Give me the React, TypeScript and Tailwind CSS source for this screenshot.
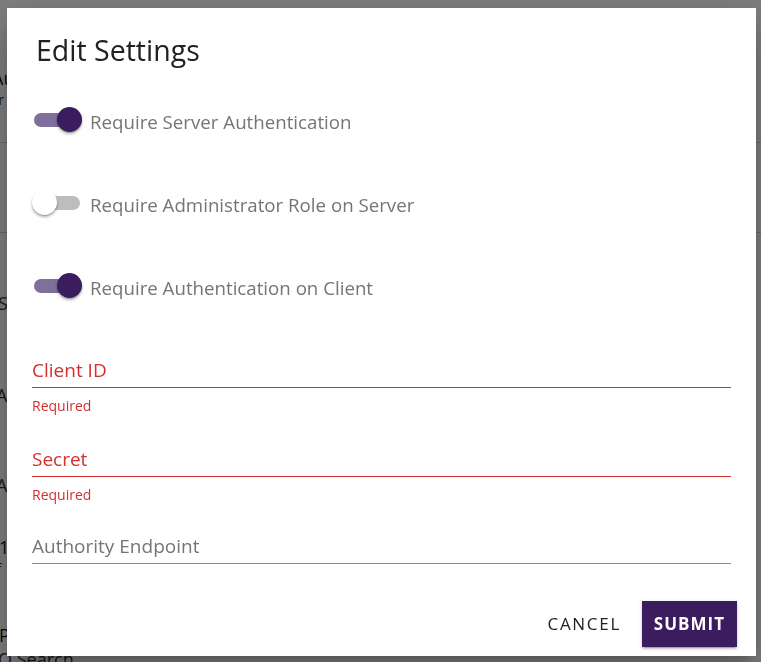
import React from "react";

const FONT = { fontFamily: '"Open Sans", "Noto Sans", sans-serif' };

function Toggle({ on }: { on: boolean }) {
  return (
    <span className="relative inline-flex h-[26px] w-[50px] shrink-0 items-center">
      <span
        className={`absolute left-[2px] top-[6px] h-[14px] w-[46px] rounded-full ${
          on ? "bg-[#7f6f9c]" : "bg-[#bdbdbd]"
        }`}
      />
      <span
        className={`absolute top-0 h-[25px] w-[25px] rounded-full shadow-[0_2px_3px_rgba(0,0,0,0.3),0_1px_1px_rgba(0,0,0,0.15)] ${
          on ? "left-[25px] bg-[#3b1c5f]" : "left-0 bg-white"
        }`}
      />
    </span>
  );
}

function ToggleRow({ on, label, className }: { on: boolean; label: string; className?: string }) {
  return (
    <div className={`flex h-[26px] items-center gap-[8px] ${className ?? ""}`}>
      <Toggle on={on} />
      <span className="pt-[3px] text-[18.7px] leading-[24px] text-[#757575]">{label}</span>
    </div>
  );
}

function Field({
  label,
  error,
  className,
}: {
  label: string;
  error?: boolean;
  className?: string;
}) {
  return (
    <div className={className}>
      <div
        className={`flex h-[33px] items-end border-b pb-[5px] ${
          error ? "border-[#d32f2f]" : "border-[#8e8e8e]"
        }`}
      >
        <span className={`text-[19px] leading-[24px] ${error ? "text-[#d32f2f]" : "text-[#757575]"}`}>
          {label}
        </span>
      </div>
      {error && (
        <div className="mt-[9px] text-[14px] leading-[18px] text-[#d32f2f]">Required</div>
      )}
    </div>
  );
}

export default function App() {
  return (
    <div className="relative h-[662px] w-[761px] overflow-hidden bg-white" style={FONT}>
      {/* underlying page */}
      <div className="flex flex-col text-[#111]">
        <div className="h-[143px] border-b border-[#cfcfcf] pt-[66px]">
          <div className="-ml-[8px] text-[18px] leading-[24px]">Au</div>
          <div className="-ml-[12px] text-[14px] leading-[20px] text-[#333]">Gr</div>
        </div>
        <div className="h-[90px] border-b border-[#cfcfcf]" />
        <div className="-ml-[2px] pt-[58px] text-[18px] leading-[24px] text-[#333]">S</div>
        <div className="-ml-[4px] pt-[68px] text-[18px] leading-[24px] text-[#333]">A</div>
        <div className="-ml-[4px] pt-[66px] text-[18px] leading-[24px] text-[#333]">A</div>
        <div className="-ml-[1px] pt-[38px] text-[18px] leading-[24px]">1</div>
        <div className="-ml-[12px] text-[14px] leading-[20px] text-[#333]">of</div>
        <div className="-ml-[1px] pt-[44px] text-[18px] leading-[24px]">Pa</div>
        <div className="-ml-[2px] text-[18px] leading-[24px] text-[#333]">Q Search</div>
      </div>

      {/* backdrop + dialog */}
      <div className="fixed inset-0 bg-black/50">
        <div className="ml-[7px] mt-[8px] flex h-[648px] w-[749px] flex-col bg-white shadow-[0_11px_15px_-7px_rgba(0,0,0,0.2),0_24px_38px_3px_rgba(0,0,0,0.14),0_9px_46px_8px_rgba(0,0,0,0.12)]">
          <h2 className="pl-[29px] pt-[24px] text-[28.5px] leading-[36px] font-normal text-[#212121]">
            Edit Settings
          </h2>
          <div className="flex flex-col px-[25px]">
            <ToggleRow on label="Require Server Authentication" className="mt-[39px]" />
            <ToggleRow on={false} label="Require Administrator Role on Server" className="mt-[57px]" />
            <ToggleRow on label="Require Authentication on Client" className="mt-[57px]" />
            <Field label="Client ID" error className="mt-[56px]" />
            <Field label="Secret" error className="mt-[29px]" />
            <Field label="Authority Endpoint" className="mt-[27px]" />
          </div>
          <div className="mt-auto flex items-center justify-end pb-[9px] pr-[19px]">
            <span className="mr-[21px] text-[17px] leading-[24px] tracking-[0.1em] text-[#212121]">
              CANCEL
            </span>
            <span className="flex h-[46px] w-[95px] items-center justify-center bg-[#3b1c5f] text-[17px] font-bold tracking-[0.06em] text-white shadow-[0_3px_1px_-2px_rgba(0,0,0,0.2),0_2px_2px_rgba(0,0,0,0.14),0_1px_5px_rgba(0,0,0,0.12)]">
              SUBMIT
            </span>
          </div>
        </div>
      </div>
    </div>
  );
}
